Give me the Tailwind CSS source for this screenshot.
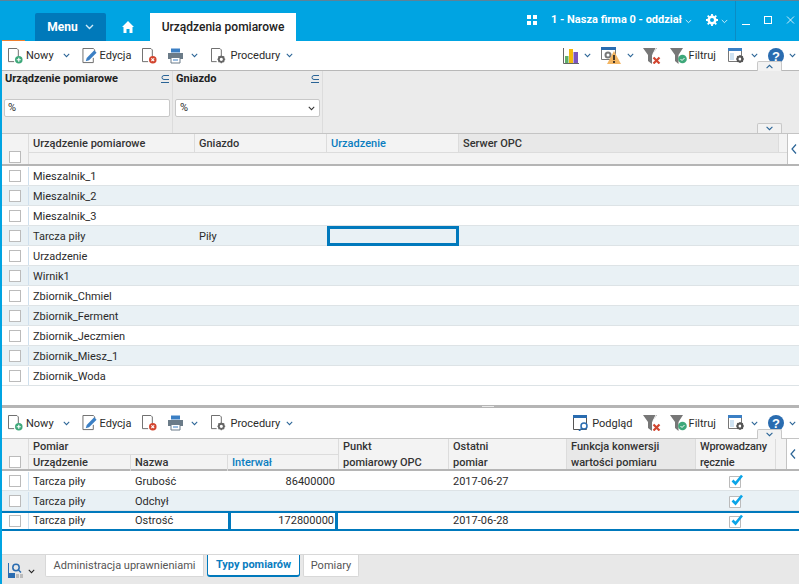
<!DOCTYPE html>
<html lang="en">
<head>
  <meta charset="UTF-8" />
  <title>Urządzenia pomiarowe</title>
  <script src="https://cdn.jsdelivr.net/npm/@tailwindcss/browser@4"></script>
</head>
<body class="w-[799px] h-[584px] overflow-hidden bg-white font-['Roboto',sans-serif] text-[11px] text-[#2b2b2b]">
  <svg class="hidden">
    <symbol id="chev" viewBox="0 0 9 6"><path d="M1 1l3.500 3.500L8 1" fill="none" stroke="#2a6496" stroke-width="1.300"/></symbol>
    <symbol id="nowy" viewBox="0 0 16 17"><path d="M.5 .5h9l1.500 1.500v7M.5 .5v14h6" fill="none" stroke="#666"/><circle cx="11.500" cy="12.500" r="4" fill="#3ea87a"/><path d="M11.500 10.300v4.400M9.300 12.500h4.400" stroke="#fff" stroke-width="1.200"/></symbol>
    <symbol id="edycja" viewBox="0 0 16 17"><path d="M.5 .5h11l1.500 1.500v2M.5 .5v15h11v-5" fill="none" stroke="#666"/><path d="M3.500 14l1-3.500 8-8 2.500 2.500-8 8z" fill="#3b7fc4"/></symbol>
    <symbol id="del" viewBox="0 0 16 17"><path d="M.5 .5h9l1.500 1.500v7M.5 .5v14h6" fill="none" stroke="#666"/><circle cx="11.500" cy="12.500" r="4" fill="#d2452f"/><path d="M10 11l3 3M13 11l-3 3" stroke="#fff" stroke-width="1.200"/></symbol>
    <symbol id="print" viewBox="0 0 17 16"><path d="M4 .5h9v4H4z" fill="#3b7fc4"/><path d="M1 5h15v6h-3V9H4v2H1z" fill="#6b7b88"/><path d="M4 9.500h9v5.500H4z" fill="#fff" stroke="#6b7b88"/><path d="M6 12h5" stroke="#3b7fc4"/></symbol>
    <symbol id="proc" viewBox="0 0 16 17"><path d="M.5 .5h9l1.500 1.500v6M.5 .5v14h5.500" fill="none" stroke="#666"/><circle cx="11" cy="12" r="2.700" fill="none" stroke="#666" stroke-width="2"/><path d="M11 7.800v1.400M11 14.800v1.400M6.800 12h1.400M13.800 12h1.400M8 9l1 1M13 14l1 1M14 9l-1 1M8 15l1-1" stroke="#666" stroke-width="1.200"/></symbol>
    <symbol id="filterx" viewBox="0 0 18 16"><path d="M0 0h14L9 7v9l-4-3V7z" fill="#777"/><path d="M13 0l-3 6" stroke="#fff"/><path d="M10.500 9.500l6 6M16.500 9.500l-6 6" stroke="#d2452f" stroke-width="2.200"/></symbol>
    <symbol id="filterok" viewBox="0 0 17 16"><path d="M0 0h13L8.500 7v9l-3.500-3V7z" fill="#777"/><circle cx="12.500" cy="11" r="4.300" fill="#3ea87a"/><path d="M10.500 11l1.500 1.500 2.500-2.500" fill="none" stroke="#fff"/></symbol>
    <symbol id="cols" viewBox="0 0 17 16"><path d="M.5 .5h13v13H.5z" fill="#fff" stroke="#777"/><path d="M0 0h14v3H0z" fill="#3b7fc4"/><path d="M2 5h4v7H2z" fill="#cfe3f3"/><circle cx="12" cy="11" r="2.500" fill="none" stroke="#555" stroke-width="2"/><path d="M12 7v1.500M12 13.500V15M8 11h1.500M14.500 11H16M9.200 8.200l1 1M13.800 12.800l1 1M14.800 8.200l-1 1M9.200 13.800l1-1" stroke="#555" stroke-width="1.200"/></symbol>
    <symbol id="help" viewBox="0 0 16 16"><circle cx="8" cy="8" r="8" fill="#2a6cb0"/><text x="8" y="12.500" text-anchor="middle" font-family="Liberation Sans" font-weight="700" font-size="13" fill="#fff">?</text></symbol>
    <symbol id="check" viewBox="0 0 14 14"><path d="M.5 2.500h11v11H.5z" fill="#fff" stroke="#bbb"/><path d="M3.500 6.500l3 3 6.500-8" fill="none" stroke="#0aa5e8" stroke-width="2.600"/></symbol>
  </svg>

  <!-- title bar -->
  <header class="h-[41px] bg-[#00a4e2] border-t border-[#5d8298] flex items-end text-white relative">
    <i class="absolute left-[2px] bottom-0 w-[23px] h-px bg-[#f08030]"></i>
    <div class="ml-[35px] w-[71px] h-[28px] bg-[#0079ba] rounded-t-[2px] flex items-center justify-center gap-[7px] font-bold text-[12px]">
      Menu
      <svg class="w-[9px] h-[6px]" viewBox="0 0 9 6"><path d="M1 1l3.500 3.500L8 1" fill="none" stroke="#cfeaf8" stroke-width="1.400"/></svg>
    </div>
    <div class="w-[44px] h-[28px] flex items-center justify-center">
      <svg class="w-[12px] h-[12px]" viewBox="0 0 12 12"><path d="M6 0l6 6h-1.500v6H7.500V8h-3v4H1.500V6H0z" fill="#fff"/></svg>
    </div>
    <div class="w-[146px] h-[28px] bg-white text-[#222] font-medium text-[12px] flex items-center justify-center">Urządzenia pomiarowe</div>
    <div class="ml-auto h-[40px] flex items-center pr-[4px]">
      <div class="grid grid-cols-2 gap-[2px] w-[10px] mr-[14px] mb-[2px]">
        <i class="w-[4px] h-[4px] bg-white"></i><i class="w-[4px] h-[4px] bg-white"></i><i class="w-[4px] h-[4px] bg-white"></i><i class="w-[4px] h-[4px] bg-white"></i>
      </div>
      <span class="font-bold text-[11px] mb-[1px]">1 - Nasza firma 0 - oddział</span>
      <svg class="w-[7px] h-[5px] ml-[3px]" viewBox="0 0 9 6"><path d="M1 1l3.500 3.500L8 1" fill="none" stroke="#fff"/></svg>
      <svg class="w-[12px] h-[12px] ml-[14px] mb-[2px]" viewBox="0 0 12 12"><circle cx="6" cy="6" r="3.300" fill="none" stroke="#fff" stroke-width="2.600"/><path d="M6 0v2M6 10v2M0 6h2M10 6h2M1.700 1.700l1.400 1.400M8.900 8.900l1.400 1.400M10.300 1.700L8.900 3.100M3.100 8.900l-1.400 1.400" stroke="#fff" stroke-width="1.800"/></svg>
      <svg class="w-[7px] h-[5px] ml-[3px]" viewBox="0 0 9 6"><path d="M1 1l3.500 3.500L8 1" fill="none" stroke="#fff"/></svg>
      <i class="w-px h-[40px] bg-[#0a8cc4] ml-[7px]"></i>
      <i class="w-[8px] h-px bg-white ml-[6px] mt-[7px]"></i>
      <i class="w-[8px] h-[8px] border border-white ml-[14px] mb-[3px]"></i>
      <svg class="w-[9px] h-[8px] ml-[14px] mb-[3px]" viewBox="0 0 8 8"><path d="M.5 .5l7 7M7.500 .5l-7 7" stroke="#fff" stroke-width=".8"/></svg>
    </div>
  </header>

  <div class="border-l-2 border-[#00a4e2] h-[543px] flex flex-col">
    <!-- upper toolbar -->
    <div class="h-[29px] flex items-center relative shrink-0">
      <svg class="w-[15px] h-[16px] ml-[6px]"><use href="#nowy"/></svg>
      <span class="ml-[3px] pt-[2px]">Nowy</span>
      <svg class="w-[7px] h-[5px] ml-[9px]"><use href="#chev"/></svg>
      <svg class="w-[16px] h-[16px] ml-[12px]"><use href="#edycja"/></svg>
      <span class="ml-[2px] pt-[2px]">Edycja</span>
      <svg class="w-[15px] h-[16px] ml-[11px]"><use href="#del"/></svg>
      <svg class="w-[17px] h-[16px] ml-[10px]"><use href="#print"/></svg>
      <svg class="w-[7px] h-[5px] ml-[7px]"><use href="#chev"/></svg>
      <svg class="w-[15px] h-[16px] ml-[13px]"><use href="#proc"/></svg>
      <span class="ml-[4px] pt-[2px]">Procedury</span>
      <svg class="w-[7px] h-[5px] ml-[6px]"><use href="#chev"/></svg>
      <div class="ml-auto flex items-center pr-[3px]">
        <svg class="w-[16px] h-[16px]" viewBox="0 0 16 16"><path d="M.5 0v15.500H16" fill="none" stroke="#666"/><path d="M2 8h3.500v7H2z" fill="#5fae6a"/><path d="M6 1h4v14H6z" fill="#f2b90f"/><path d="M10.500 4H15v11h-4.500z" fill="#7a55c0"/></svg>
        <svg class="w-[7px] h-[5px] ml-[5px]"><use href="#chev"/></svg>
        <svg class="w-[20px] h-[17px] ml-[10px]" viewBox="0 0 20 17"><path d="M.5 .5h14v12H.5z" fill="#fff" stroke="#777"/><path d="M0 0h15v3H0z" fill="#2a6cb0"/><circle cx="7" cy="8" r="2.500" fill="none" stroke="#777" stroke-width="2"/><path d="M13 4l7 13H6z" fill="#f3b664"/><path d="M13 8v5M13 14v2" stroke="#111" stroke-width="1.500"/></svg>
        <svg class="w-[7px] h-[5px] ml-[6px]"><use href="#chev"/></svg>
        <svg class="w-[18px] h-[16px] ml-[9px]"><use href="#filterx"/></svg>
        <svg class="w-[17px] h-[16px] ml-[9px]"><use href="#filterok"/></svg>
        <span class="ml-[2px] pt-[2px]">Filtruj</span>
        <svg class="w-[17px] h-[16px] ml-[12px]"><use href="#cols"/></svg>
        <svg class="w-[7px] h-[5px] ml-[6px]"><use href="#chev"/></svg>
        <svg class="w-[16px] h-[16px] ml-[10px]"><use href="#help"/></svg>
        <svg class="w-[7px] h-[5px] ml-[5px]"><use href="#chev"/></svg>
      </div>
    </div>

    <!-- filter panel -->
    <div class="h-[63px] shrink-0 bg-[#ebebeb] border-t border-[#b8b8b8] flex relative">
      <div class="w-[171px] border-r border-[#dcdcdc] px-[2px] pt-px">
        <div class="flex justify-between items-center font-bold h-[14px] text-[#222] pl-px pr-[1px]">Urządzenie pomiarowe
          <svg class="w-[8px] h-[8px]" viewBox="0 0 8 8"><path d="M8 .5H3a2 2 0 0 0 0 4h5M0 7.500h8" fill="none" stroke="#2a6496"/></svg>
        </div>
        <div class="mt-[13px] h-[18px] w-[166px] bg-white border border-[#c8c8c8] rounded-[2px] px-[3px] leading-[16px]">%</div>
      </div>
      <div class="w-[150px] border-r border-[#dcdcdc] px-[2px] pt-px">
        <div class="flex justify-between items-center font-bold h-[14px] text-[#222] pl-px pr-[1px]">Gniazdo
          <svg class="w-[8px] h-[8px]" viewBox="0 0 8 8"><path d="M8 .5H3a2 2 0 0 0 0 4h5M0 7.500h8" fill="none" stroke="#2a6496"/></svg>
        </div>
        <div class="mt-[13px] h-[18px] w-[145px] bg-white border border-[#c8c8c8] rounded-[2px] px-[4px] leading-[16px] flex justify-between items-center">%
          <svg class="w-[7px] h-[5px]" viewBox="0 0 9 6"><path d="M1 1l3.500 3.500L8 1" fill="none" stroke="#333" stroke-width="1.300"/></svg>
        </div>
      </div>
      <div class="absolute right-[17px] top-[-10px] w-[25px] h-[10px] bg-[#f2f2f2] border border-[#c8c8c8] border-b-0 rounded-t-[2px] flex justify-center items-center">
        <svg class="w-[9px] h-[5px] rotate-180"><use href="#chev"/></svg>
      </div>
      <div class="absolute right-[17px] bottom-0 w-[25px] h-[10px] bg-[#f2f2f2] border border-[#c8c8c8] border-b-0 rounded-t-[2px] flex justify-center items-center">
        <svg class="w-[9px] h-[5px]"><use href="#chev"/></svg>
      </div>
    </div>

    <!-- upper grid head -->
    <div class="h-[33px] shrink-0 flex border-t border-[#c4c4c4] border-b-[2px] border-b-[#b5b5b5] bg-[#f3f3f3] font-medium text-[#333]">
      <div class="w-[27px] border-r border-[#dcdcdc] flex items-end justify-center pb-[1px]"><i class="w-[12px] h-[12px] bg-white border border-[#bbb]"></i></div>
      <div class="flex-1 flex flex-col">
        <div class="h-[19px] flex border-b border-[#dcdcdc] leading-[20px]">
          <div class="w-[166px] border-r border-[#dcdcdc] pl-[4px]">Urządzenie pomiarowe</div>
          <div class="w-[132px] border-r border-[#dcdcdc] pl-[4px]">Gniazdo</div>
          <div class="w-[132px] border-r border-[#dcdcdc] pl-[4px] text-[#0a7dbf]">Urzadzenie</div>
          <div class="w-[320px] bg-[#e8e8e8] border-r border-[#dcdcdc] pl-[4px]">Serwer OPC</div>
        </div>
      </div>
      <div class="w-[12px] border-l border-[#c4c4c4] flex items-center justify-center bg-white">
        <svg class="w-[6px] h-[10px]" viewBox="0 0 6 10"><path d="M5 .5L1 5l4 4.500" fill="none" stroke="#2a6496" stroke-width="1.200"/></svg>
      </div>
    </div>

    <!-- upper grid rows -->
    <div id="rows" class="h-[239px] shrink-0 overflow-hidden"></div>

    <!-- splitter -->
    <div class="h-[3px] shrink-0 bg-[#b5b5b5]"><i class="block ml-[480px] w-[12px] h-px mt-px bg-white/70"></i></div>

    <!-- lower toolbar -->
    <div class="h-[30px] flex items-center shrink-0">
      <svg class="w-[15px] h-[16px] ml-[6px]"><use href="#nowy"/></svg>
      <span class="ml-[3px] pt-[2px]">Nowy</span>
      <svg class="w-[7px] h-[5px] ml-[9px]"><use href="#chev"/></svg>
      <svg class="w-[16px] h-[16px] ml-[12px]"><use href="#edycja"/></svg>
      <span class="ml-[2px] pt-[2px]">Edycja</span>
      <svg class="w-[15px] h-[16px] ml-[11px]"><use href="#del"/></svg>
      <svg class="w-[17px] h-[16px] ml-[10px]"><use href="#print"/></svg>
      <svg class="w-[7px] h-[5px] ml-[7px]"><use href="#chev"/></svg>
      <svg class="w-[15px] h-[16px] ml-[13px]"><use href="#proc"/></svg>
      <span class="ml-[4px] pt-[2px]">Procedury</span>
      <svg class="w-[7px] h-[5px] ml-[6px]"><use href="#chev"/></svg>
      <div class="ml-auto flex items-center pr-[3px]">
        <svg class="w-[17px] h-[16px]" viewBox="0 0 17 16"><path d="M.5 .5h13v14H.5z" fill="#fff" stroke="#555"/><path d="M0 0h14v3H0z" fill="#2a6cb0"/><circle cx="11" cy="11" r="3" fill="#fff" stroke="#2a6cb0" stroke-width="1.500"/><path d="M8.500 13.500l-2.500 2.500" stroke="#2a6cb0" stroke-width="1.500"/></svg>
        <span class="ml-[2px] pt-[2px]">Podgląd</span>
        <svg class="w-[18px] h-[16px] ml-[10px]"><use href="#filterx"/></svg>
        <svg class="w-[17px] h-[16px] ml-[9px]"><use href="#filterok"/></svg>
        <span class="ml-[2px] pt-[2px]">Filtruj</span>
        <svg class="w-[17px] h-[16px] ml-[12px]"><use href="#cols"/></svg>
        <svg class="w-[7px] h-[5px] ml-[6px]"><use href="#chev"/></svg>
        <svg class="w-[16px] h-[16px] ml-[10px]"><use href="#help"/></svg>
        <svg class="w-[7px] h-[5px] ml-[5px]"><use href="#chev"/></svg>
      </div>
    </div>

    <!-- lower grid head -->
    <div class="h-[33px] shrink-0 flex border-t border-[#c4c4c4] border-b-[2px] border-b-[#b5b5b5] bg-[#f3f3f3] font-medium text-[#333] leading-[16px] relative">
      <div class="w-[27px] border-r border-[#dcdcdc] flex items-end justify-center pb-[1px]"><i class="w-[12px] h-[12px] bg-white border border-[#bbb]"></i></div>
      <div class="w-[310px] border-r border-[#dcdcdc] flex flex-col">
        <div class="h-[16px] border-b border-[#dcdcdc] pl-[4px]">Pomiar</div>
        <div class="flex flex-1">
          <div class="w-[102px] border-r border-[#dcdcdc] pl-[4px]">Urządzenie</div>
          <div class="w-[97px] border-r border-[#dcdcdc] pl-[4px]">Nazwa</div>
          <div class="pl-[4px] text-[#0a7dbf]">Interwał</div>
        </div>
      </div>
      <div class="w-[110px] border-r border-[#dcdcdc] pl-[4px]">Punkt<br>pomiarowy OPC</div>
      <div class="w-[118px] border-r border-[#dcdcdc] pl-[4px]">Ostatni<br>pomiar</div>
      <div class="w-[129px] border-r border-[#dcdcdc] pl-[4px] bg-[#e8e8e8]">Funkcja konwersji<br>wartości pomiaru</div>
      <div class="w-[80px] border-r border-[#dcdcdc] pl-[4px] tracking-[-.2px]">Wprowadzany<br>ręcznie</div>
      <div class="flex-1 border-r border-[#c4c4c4]"></div>
      <div class="w-[12px] flex items-center justify-center bg-white">
        <svg class="w-[6px] h-[10px]" viewBox="0 0 6 10"><path d="M5 .5L1 5l4 4.500" fill="none" stroke="#2a6496" stroke-width="1.200"/></svg>
      </div>
      <div class="absolute right-[17px] top-[-10px] w-[25px] h-[10px] bg-[#f2f2f2] border border-[#c8c8c8] border-b-0 rounded-t-[2px] flex justify-center items-center">
        <svg class="w-[9px] h-[5px]"><use href="#chev"/></svg>
      </div>
    </div>

    <!-- lower grid rows -->
    <div class="h-[83px] shrink-0">
      <div class="h-[20px] pt-px flex items-center border-b border-[#dde3e6]">
        <div class="w-[27px] border-r border-[#cfe0ee] h-full flex items-center justify-center"><i class="w-[12px] h-[12px] bg-white border border-[#bbb]"></i></div>
        <span class="w-[102px] pl-[4px] pt-[2px]">Tarcza piły</span><span class="w-[97px] pl-[4px] pt-[2px]">Grubość</span><span class="w-[110px] text-right pr-[3px] pt-[2px]">86400000</span><span class="w-[111px]"></span><span class="w-[118px] pl-[4px] pt-[2px]">2017-06-27</span><span class="w-[129px]"></span>
        <svg class="w-[14px] h-[14px] ml-[33px]"><use href="#check"/></svg>
      </div>
      <div class="h-[20px] pt-px flex items-center border-b border-[#dde3e6] bg-[#e9f1f5]">
        <div class="w-[27px] border-r border-[#cfe0ee] h-full flex items-center justify-center"><i class="w-[12px] h-[12px] bg-white border border-[#bbb]"></i></div>
        <span class="w-[102px] pl-[4px] pt-[2px]">Tarcza piły</span><span class="w-[97px] pl-[4px] pt-[2px]">Odchył</span><span class="w-[110px]"></span><span class="w-[111px]"></span><span class="w-[118px]"></span><span class="w-[129px]"></span>
        <svg class="w-[14px] h-[14px] ml-[33px]"><use href="#check"/></svg>
      </div>
      <div class="h-[20px] flex items-center border-y-2 border-[#0079bc]">
        <div class="w-[27px] border-r border-[#cfe0ee] h-full flex items-center justify-center"><i class="w-[12px] h-[12px] bg-white border border-[#bbb]"></i></div>
        <span class="w-[102px] pl-[4px] pt-px">Tarcza piły</span><span class="w-[97px] pl-[4px] pt-px">Ostrość</span><span class="w-[110px] h-full text-right pr-[1px] leading-[16px] border-x-[3px] border-[#0079bc]">172800000</span><span class="w-[111px]"></span><span class="w-[118px] pl-[4px] pt-px">2017-06-28</span><span class="w-[129px]"></span>
        <svg class="w-[14px] h-[14px] ml-[33px]"><use href="#check"/></svg>
      </div>
    </div>

    <!-- bottom tabs -->
    <div class="flex-1 bg-[#e8e8e8] border-t border-[#d8d8d8] flex items-start">
      <svg class="w-[15px] h-[15px] ml-[6px] mt-[8px]" viewBox="0 0 15 15"><path d="M.5 0v10" fill="none" stroke="#2a6cb0"/><circle cx="8" cy="4.500" r="3.200" fill="none" stroke="#2a6cb0" stroke-width="1.500"/><path d="M10.500 7l2.500 2.500" stroke="#2a6cb0" stroke-width="1.500"/><path d="M0 10h7v5H0z" fill="#2a6cb0"/><path d="M8 11h3v4H8zM12 11h3v4h-3z" fill="#bbb"/></svg>
      <svg class="w-[7px] h-[5px] ml-[5px] mt-[14px]" viewBox="0 0 9 6"><path d="M1 1l3.500 3.500L8 1" fill="none" stroke="#222" stroke-width="1.300"/></svg>
      <div class="ml-[10px] w-[159px] h-[22px] pt-px bg-white border border-[#d8d8d8] border-t-0 rounded-b-[2px] flex items-center justify-center text-[#555]">Administracja uprawnieniami</div>
      <div class="ml-[3px] w-[93px] h-[22px] pt-px bg-white border-x border-b-2 border-[#0079bc] rounded-b-[3px] flex items-center justify-center font-bold text-[#0a7dbf]">Typy pomiarów</div>
      <div class="ml-[3px] w-[56px] h-[22px] pt-px bg-white border border-[#d8d8d8] border-t-0 rounded-b-[2px] flex items-center justify-center text-[#555]">Pomiary</div>
    </div>
  </div>

  <script>
    const names = ["Mieszalnik_1", "Mieszalnik_2", "Mieszalnik_3", "Tarcza piły", "Urzadzenie", "Wirnik1", "Zbiornik_Chmiel", "Zbiornik_Ferment", "Zbiornik_Jeczmien", "Zbiornik_Miesz_1", "Zbiornik_Woda"];
    document.getElementById("rows").innerHTML = names.map((name, i) => {
      const bg = i % 2 ? "bg-[#e9f1f5]" : "bg-white";
      const extra = name === "Tarcza piły"
        ? `<span class="pl-[4px] pt-[2px] w-[132px]">Piły</span><div class="w-[132px] h-[20px] -mt-px border-[3px] border-[#0079bc]"></div>`
        : "";
      return `<div class="h-[20px] pt-px flex items-center border-b border-[#dde3e6] ${bg}">
        <div class="w-[27px] border-r border-[#cfe0ee] h-full flex items-center justify-center"><i class="w-[12px] h-[12px] bg-white border border-[#bbb]"></i></div>
        <span class="pl-[4px] pt-[2px] w-[166px]">${name}</span>${extra}
      </div>`;
    }).join("");
  </script>
</body>
</html>
